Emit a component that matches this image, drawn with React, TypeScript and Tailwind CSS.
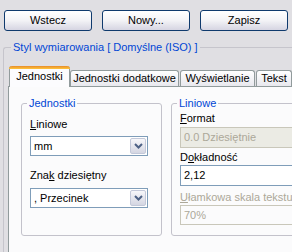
import React from "react";

function Chevron() {
  return (
    <svg width="9" height="6" viewBox="0 0 9 6" className="block">
      <path d="M1 1 L4.5 4.5 L8 1" stroke="#4d6185" strokeWidth="2" fill="none" />
    </svg>
  );
}

function Button({ label }: { label: string }) {
  return (
    <button className="flex h-[21px] w-[88px] items-center justify-center rounded-[3px] border border-[#0f3a6d] bg-gradient-to-b from-white via-[#f3f3f6] to-[#d6d5e2] text-black">
      {label}
    </button>
  );
}

function Combo({ value }: { value: string }) {
  return (
    <div className="flex h-[20px] w-[118px] items-center border border-[#7f9db9] bg-white">
      <span className="flex-1 pl-[3px]">{value}</span>
      <span className="mr-px flex h-[16px] w-[16px] items-center justify-center rounded-[2px] border border-[#c3c8d9] bg-gradient-to-b from-[#f7f7fa] to-[#d4d6e2]">
        <Chevron />
      </span>
    </div>
  );
}

function Group({
  label,
  className,
  children,
}: {
  label: string;
  className: string;
  children: React.ReactNode;
}) {
  return (
    <div className={"relative rounded-[3px] border border-[#c3c2cb] " + className}>
      <span className="absolute left-[5px] top-[-7px] bg-[#fbfbfc] px-[2px] leading-[13px] text-[#0046d5]">
        {label}
      </span>
      {children}
    </div>
  );
}

export default function App() {
  return (
    <div className="h-[252px] w-[292px] overflow-hidden bg-[#e0dfe3] font-['Liberation_Sans',Arial,sans-serif] text-[11px] leading-[13px] text-black">
      <div className="flex gap-[10px] pl-[4px] pt-[10px]">
        <Button label="Wstecz" />
        <Button label="Nowy..." />
        <Button label="Zapisz" />
      </div>

      <div className="relative ml-[3px] mt-[16px] w-[400px] rounded-tl-[3px] border-l border-t border-[#c6c5cc] pt-[18px]">
        <span className="absolute left-[7px] top-[-7px] bg-[#e0dfe3] px-[2px] text-[#0046d5]">
          Styl wymiarowania [ Domyślne (ISO) ]
        </span>

        <div className="ml-[5px] flex items-end">
          <div className="relative z-10 -mb-px flex h-[21px] w-[61px] items-start justify-center rounded-t-[3px] border-x border-[#919b9c] bg-[#fcfcfe]">
            <div className="absolute inset-x-[-1px] top-0 h-[3px] rounded-t-[3px] bg-gradient-to-b from-[#e68b2c] to-[#ffc73c]" />
            <span className="pt-[4px]">Jednostki</span>
          </div>
          <div className="flex h-[16px] w-[109px] items-center justify-center rounded-t-[3px] border-x border-t border-[#919b9c] bg-gradient-to-b from-white to-[#e8e8ee]">
            Jednostki dodatkowe
          </div>
          <div className="ml-px flex h-[16px] w-[75px] items-center justify-center rounded-t-[3px] border-x border-t border-[#919b9c] bg-gradient-to-b from-white to-[#e8e8ee]">
            Wyświetlanie
          </div>
          <div className="ml-px flex h-[16px] w-[36px] items-center justify-center rounded-t-[3px] border-x border-t border-[#919b9c] bg-gradient-to-b from-white to-[#e8e8ee]">
            Tekst
          </div>
        </div>

        <div className="ml-[4px] flex h-[200px] gap-[9px] border border-[#919b9c] bg-[#fbfbfc] pl-[12px] pt-[16px]">
          <Group label="Jednostki" className="h-[133px] w-[141px] pl-[8px]">
            <div className="mt-[14px]">
              <span className="underline">L</span>iniowe
            </div>
            <div className="mt-[5px]">
              <Combo value="mm" />
            </div>
            <div className="mt-[13px]">
              Zna<span className="underline">k</span> dziesiętny
            </div>
            <div className="mt-[6px]">
              <Combo value=", Przecinek" />
            </div>
          </Group>

          <Group label="Liniowe" className="h-[133px] w-[200px] pl-[8px]">
            <div className="mt-[8px]">
              <span className="underline">F</span>ormat
            </div>
            <div className="mt-[2px] flex h-[21px] w-[150px] items-center border border-[#c9c7ba] bg-[#ebebe4] pl-[3px] text-[#aca899]">
              0.0 Dziesiętnie
            </div>
            <div className="mt-[3px]">
              D<span className="underline">o</span>kładność
            </div>
            <div className="mt-[1px] flex h-[21px] w-[150px] items-center border border-[#7f9db9] bg-white pl-[3px]">
              2,12
            </div>
            <div className="mt-[5px] text-[#aca899]">
              <span className="underline">U</span>łamkowa skala tekstu
            </div>
            <div className="mt-[1px] flex h-[20px] w-[150px] items-center border border-[#c9c7ba] bg-[#fbfbfc] pl-[3px] text-[#aca899]">
              70%
            </div>
          </Group>
        </div>
      </div>
    </div>
  );
}
